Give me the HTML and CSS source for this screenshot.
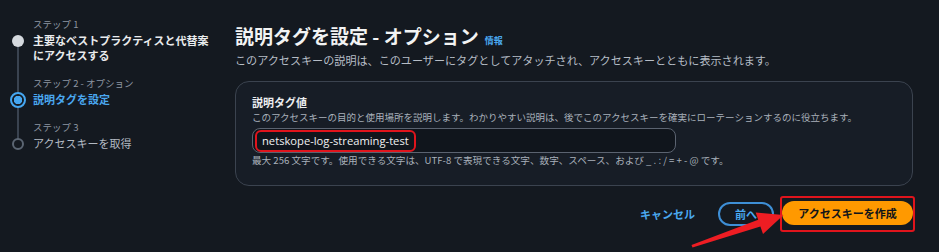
FILE: index.html
```html
<!DOCTYPE html>
<html lang="ja">
<head>
    <meta charset="UTF-8">
    <meta name="viewport" content="width=device-width, initial-scale=1.0">
    <title>説明タグを設定</title>
    <link rel="stylesheet" href="styles.css">
</head>
<body>
    <div class="page">
        <nav class="steps">
            <div class="step done">
                <div class="step-label">ステップ 1</div>
                <div class="marker"><span class="dot"></span></div>
                <div class="step-title">主要なベストプラクティスと代替案にアクセスする</div>
            </div>
            <div class="step current">
                <div class="step-label">ステップ 2 - オプション</div>
                <div class="marker"><span class="dot"></span></div>
                <div class="step-title">説明タグを設定</div>
            </div>
            <div class="step todo">
                <div class="step-label">ステップ 3</div>
                <div class="marker"><span class="dot"></span></div>
                <div class="step-title">アクセスキーを取得</div>
            </div>
        </nav>

        <main class="content">
            <div class="title-row">
                <h1>説明タグを設定 - オプション</h1>
                <a class="info" href="#">情報</a>
            </div>
            <p class="subtitle">このアクセスキーの説明は、このユーザーにタグとしてアタッチされ、アクセスキーとともに表示されます。</p>

            <section class="panel">
                <div class="field-label">説明タグ値</div>
                <div class="field-desc">このアクセスキーの目的と使用場所を説明します。わかりやすい説明は、後でこのアクセスキーを確実にローテーションするのに役立ちます。</div>
                <div class="input">
                    <span class="mark">netskope-log-streaming-test</span>
                </div>
                <div class="field-hint">最大 256 文字です。使用できる文字は、UTF-8 で表現できる文字、数字、スペース、および _ . : / = + - @ です。</div>
            </section>

            <div class="actions">
                <a class="cancel" href="#">キャンセル</a>
                <button class="btn-prev">前へ</button>
                <span class="mark-box">
                    <button class="btn-primary">アクセスキーを作成</button>
                </span>
            </div>
        </main>
    </div>

    <!-- 注釈の矢印 -->
    <svg class="arrow" width="939" height="252" viewBox="0 0 939 252">
        <polygon points="691.5,245 758.2,219.8 755.7,212.5 783.5,215 763,234 760.4,226.6 692.5,247.5" fill="#ee1d23"/>
    </svg>
</body>
</html>
```

FILE: styles.css
```css
body {
    margin: 0;
    background-color: #141920;
    color: #e9ebed;
    font-family: 'Noto Sans CJK JP', 'Noto Sans', sans-serif;
    width: 939px;
    height: 252px;
    overflow: hidden;
    position: relative;
}

.page {
    display: flex;
}

/* サイドバー */
.steps {
    width: 220px;
    flex-shrink: 0;
    box-sizing: border-box;
    padding: 17px 0 0 10px;
    display: flex;
    flex-direction: column;
    gap: 13px;
}

.step {
    position: relative;
    display: grid;
    grid-template-columns: 16px 180px;
    column-gap: 7px;
    row-gap: 2px;
}

.step:not(:last-child)::after {
    content: '';
    position: absolute;
    left: 7px;
    top: 23.5px;
    bottom: -36.5px;
    width: 2px;
    background-color: #3a4350;
}

.step-label {
    grid-column: 2;
    font-size: 9.5px;
    line-height: 14px;
    color: #8d96a2;
}

.marker {
    grid-column: 1;
    height: 15px;
    display: flex;
    align-items: center;
    justify-content: center;
    position: relative;
    z-index: 1;
}

.dot {
    display: block;
    box-sizing: border-box;
    border-radius: 50%;
}

.step-title {
    grid-column: 2;
    font-size: 11px;
    line-height: 15px;
}

.done .dot {
    width: 12px;
    height: 12px;
    background-color: #d5d9de;
}

.done .step-title {
    font-weight: bold;
    color: #e9ebed;
}

.current .dot {
    width: 16px;
    height: 16px;
    border: 2px solid #45a6f0;
    background: radial-gradient(circle, #45a6f0 0 4px, #141920 4.5px);
}

.current .step-title {
    font-weight: bold;
    color: #4aa8f0;
}

.todo .dot {
    width: 12px;
    height: 12px;
    border: 2px solid #5b6572;
    background-color: #141920;
}

.todo .step-title {
    color: #b3bac3;
}

/* メイン */
.content {
    flex: 1;
    padding: 23px 26px 0 15px;
}

.title-row {
    display: flex;
    align-items: baseline;
    gap: 6px;
}

h1 {
    margin: 0;
    font-size: 19px;
    line-height: 26px;
    font-weight: bold;
    color: #f2f3f3;
}

.info {
    font-size: 9px;
    font-weight: bold;
    color: #4aa8f0;
    text-decoration: none;
}

.subtitle {
    margin: 3px 0 0;
    font-size: 11.1px;
    line-height: 16px;
    color: #b6bdc6;
}

.panel {
    margin-top: 13px;
    border: 1px solid #3b434f;
    border-radius: 14px;
    background-color: #171d26;
    padding: 13px 16px 18px;
}

.field-label {
    font-size: 11px;
    font-weight: bold;
    line-height: 15px;
    color: #eceef0;
}

.field-desc, .field-hint {
    font-size: 9.5px;
    line-height: 14px;
    color: #a9b1bb;
}

.input {
    margin-top: 4px;
    width: 424px;
    height: 25px;
    box-sizing: border-box;
    border: 1px solid #5b6370;
    border-radius: 8px;
    background-color: #10151c;
    padding: 1px 2px;
    display: flex;
    align-items: center;
}

.mark {
    border: 2px solid #e0141c;
    border-radius: 6px;
    height: 22px;
    box-sizing: border-box;
    padding: 0 5px;
    display: flex;
    align-items: center;
    font-family: 'Open Sans', 'Noto Sans', sans-serif;
    font-size: 11.2px;
    font-weight: 500;
    color: #f0f1f2;
}

.field-hint {
    margin-top: 1px;
    font-size: 9.6px;
    line-height: 13px;
}

/* ボタン */
.actions {
    margin-top: 10px;
    margin-right: -2px;
    display: flex;
    justify-content: flex-end;
    align-items: center;
}

.cancel {
    font-size: 11px;
    font-weight: bold;
    color: #4aa8f0;
    text-decoration: none;
    margin-right: 23px;
}

button {
    font-family: inherit;
    font-size: 11px;
    font-weight: bold;
    height: 24px;
    border-radius: 12px;
    cursor: pointer;
}

.btn-prev {
    background: transparent;
    border: 2px solid #3e8fd6;
    color: #4aa8f0;
    padding: 0 15px;
    margin-right: 6px;
}

.mark-box {
    display: flex;
    border: 2px solid #e0141c;
    border-radius: 3px;
    padding: 3px 0 5px;
}

.btn-primary {
    border: none;
    background-color: #ff9900;
    color: #0f141a;
    padding: 0 16px;
    width: 131px;
}

.arrow {
    position: absolute;
    left: 0;
    top: 0;
    pointer-events: none;
}
```
